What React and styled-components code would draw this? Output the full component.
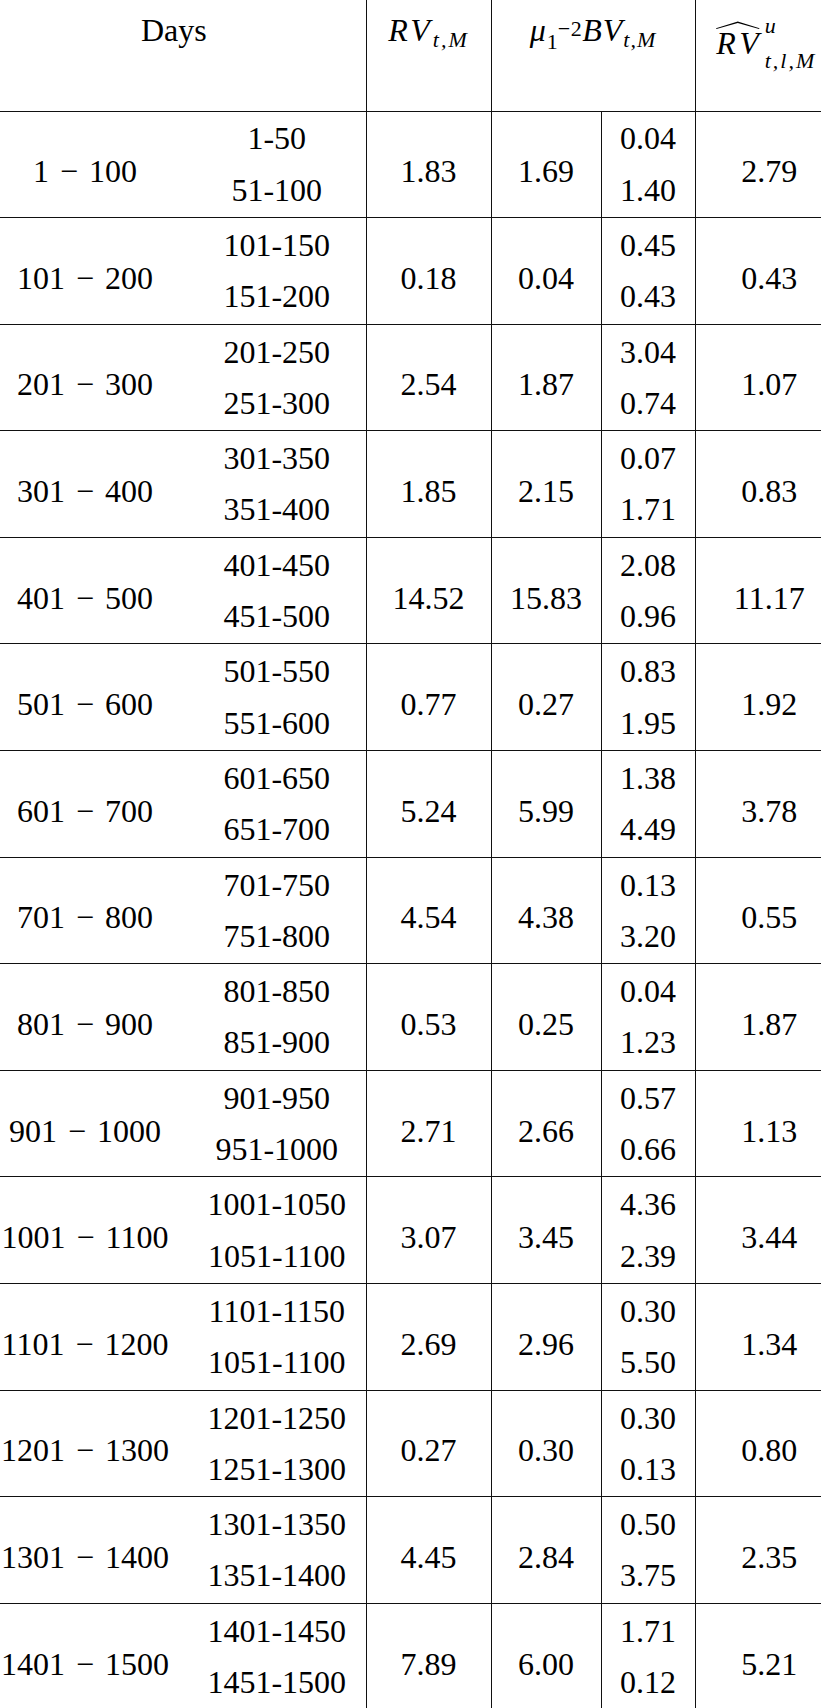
import React from "react";
import styled, { createGlobalStyle } from "styled-components";

const SERIF = `"Liberation Serif", "Times New Roman", serif`;
const LINE = "1px solid #111";

const GlobalStyle = createGlobalStyle`
  html, body {
    margin: 0;
    padding: 0;
    background: #fff;
  }
  body {
    font-family: ${SERIF};
    color: #000;
    overflow: hidden;
  }
  table, th, td {
    font-family: ${SERIF};
  }
`;

const rows = [
  ["1", "100", ["1-50", "51-100"], "1.83", "1.69", ["0.04", "1.40"], "2.79"],
  ["101", "200", ["101-150", "151-200"], "0.18", "0.04", ["0.45", "0.43"], "0.43"],
  ["201", "300", ["201-250", "251-300"], "2.54", "1.87", ["3.04", "0.74"], "1.07"],
  ["301", "400", ["301-350", "351-400"], "1.85", "2.15", ["0.07", "1.71"], "0.83"],
  ["401", "500", ["401-450", "451-500"], "14.52", "15.83", ["2.08", "0.96"], "11.17"],
  ["501", "600", ["501-550", "551-600"], "0.77", "0.27", ["0.83", "1.95"], "1.92"],
  ["601", "700", ["601-650", "651-700"], "5.24", "5.99", ["1.38", "4.49"], "3.78"],
  ["701", "800", ["701-750", "751-800"], "4.54", "4.38", ["0.13", "3.20"], "0.55"],
  ["801", "900", ["801-850", "851-900"], "0.53", "0.25", ["0.04", "1.23"], "1.87"],
  ["901", "1000", ["901-950", "951-1000"], "2.71", "2.66", ["0.57", "0.66"], "1.13"],
  ["1001", "1100", ["1001-1050", "1051-1100"], "3.07", "3.45", ["4.36", "2.39"], "3.44"],
  ["1101", "1200", ["1101-1150", "1051-1100"], "2.69", "2.96", ["0.30", "5.50"], "1.34"],
  ["1201", "1300", ["1201-1250", "1251-1300"], "0.27", "0.30", ["0.30", "0.13"], "0.80"],
  ["1301", "1400", ["1301-1350", "1351-1400"], "4.45", "2.84", ["0.50", "3.75"], "2.35"],
  ["1401", "1500", ["1401-1450", "1451-1500"], "7.89", "6.00", ["1.71", "0.12"], "5.21"],
];

const colWidths = [206, 178, 125, 110, 94, 148];

const Page = styled.div`
  width: 821px;
  height: 1708px;
  overflow: hidden;
`;

const Table = styled.table`
  margin-left: -18px;
  width: 861px;
  border-collapse: collapse;
  table-layout: fixed;
  font-family: ${SERIF};
  font-size: 32px;
  color: #000;
`;

const Head = styled.thead`
  border-bottom: ${LINE};
`;

const HeadRow = styled.tr`
  height: 111px;
`;

const HeadCell = styled.th`
  padding: 12px 0 0;
  vertical-align: top;
  text-align: center;
  font-family: ${SERIF};
  font-weight: normal;
  line-height: 36px;
  white-space: nowrap;
  border-right: ${(p) => (p.$edge ? LINE : "none")};
`;

const HatHeadCell = styled(HeadCell)`
  padding-top: 0;
  line-height: normal;
`;

const Group = styled.tbody`
  border-bottom: ${LINE};
`;

const SubRow = styled.tr`
  height: 53.3px;
`;

const Cell = styled.td`
  padding: 0;
  text-align: center;
  vertical-align: middle;
  white-space: nowrap;
  font-family: ${SERIF};
  line-height: 36px;
  border-right: ${(p) => (p.$edge ? LINE : "none")};
`;

// multirow cells sit a little below the middle, as LaTeX puts them
const SpanCell = styled(Cell)`
  padding-top: 14px;
`;

const SplitCell = styled(Cell)`
  padding: ${(p) => (p.$second ? "0 0 2px" : "1px 0 0")};
`;

const Minus = styled.span`
  margin: 0 11px;
`;

const Mi = styled.span`
  font-style: italic;
  letter-spacing: ${(p) => p.$track || 0}px;
`;

const Script = styled.span`
  font-size: 22px;
  line-height: 0;
  font-style: ${(p) => (p.$italic ? "italic" : "normal")};
  letter-spacing: ${(p) => p.$track || 0}px;
  vertical-align: ${(p) => p.$shift}px;
`;

const HatExpr = styled.span`
  display: inline-flex;
  align-items: flex-start;
  margin-left: -6px;
`;

const HatBase = styled.span`
  display: flex;
  flex-direction: column;
  align-items: stretch;
  svg {
    display: block;
    width: calc(100% - 3px);
    height: 8px;
    margin-top: 6px;
  }
`;

const HatLetters = styled.span`
  font-style: italic;
  font-size: 32px;
  line-height: 32px;
  margin-top: -2px;
  letter-spacing: 4px;
`;

const StackedScripts = styled.span`
  display: flex;
  flex-direction: column;
  align-items: flex-start;
  font-size: 22px;
  line-height: 22px;
  font-style: italic;
  letter-spacing: 2px;
`;

const Upper = styled.span`
  margin-left: 2px;
`;

const Lower = styled.span`
  margin-top: 12.6px;
  margin-left: 2px;
`;

const Hat = () => (
  <svg viewBox="0 0 46 9" preserveAspectRatio="none" aria-hidden="true">
    <path d="M0 8.1 L23 0.5 L46 8.1 L45.5 8.9 L23 2.2 L0.5 8.9 Z" fill="#000" />
  </svg>
);

const Range = ({ from, to }) => (
  <>
    {from}
    <Minus>−</Minus>
    {to}
  </>
);

const App = () => {
  return (
    <Page>
      <GlobalStyle />
      <Table>
        <colgroup>
          {colWidths.map((w, i) => (
            <col key={i} style={{ width: `${w}px` }} />
          ))}
        </colgroup>
        <Head>
          <HeadRow>
            <HeadCell colSpan={2} $edge>
              Days
            </HeadCell>
            <HeadCell $edge>
              <Mi $track={3}>RV</Mi>
              <Script $italic $track={2} $shift={-6}>
                t,M
              </Script>
            </HeadCell>
            <HeadCell colSpan={2} $edge>
              <Mi $track={1}>μ</Mi>
              <Script $shift={-8}>1</Script>
              <Script $track={0.5} $shift={5}>
                −2
              </Script>
              <Mi $track={1}>BV</Mi>
              <Script $italic $track={1} $shift={-6}>
                t,M
              </Script>
            </HeadCell>
            <HatHeadCell>
              <HatExpr>
                <HatBase>
                  <Hat />
                  <HatLetters>RV</HatLetters>
                </HatBase>
                <StackedScripts>
                  <Upper>u</Upper>
                  <Lower>t,l,M</Lower>
                </StackedScripts>
              </HatExpr>
            </HatHeadCell>
          </HeadRow>
        </Head>
        {rows.map(([from, to, halves, rv, bv, split, hat]) => (
          <Group key={from}>
            <SubRow>
              <SpanCell rowSpan={2}>
                <Range from={from} to={to} />
              </SpanCell>
              <SplitCell $edge>{halves[0]}</SplitCell>
              <SpanCell rowSpan={2} $edge>
                {rv}
              </SpanCell>
              <SpanCell rowSpan={2} $edge>
                {bv}
              </SpanCell>
              <SplitCell $edge>{split[0]}</SplitCell>
              <SpanCell rowSpan={2}>{hat}</SpanCell>
            </SubRow>
            <SubRow>
              <SplitCell $edge $second>
                {halves[1]}
              </SplitCell>
              <SplitCell $edge $second>
                {split[1]}
              </SplitCell>
            </SubRow>
          </Group>
        ))}
      </Table>
    </Page>
  );
};

export default App;
